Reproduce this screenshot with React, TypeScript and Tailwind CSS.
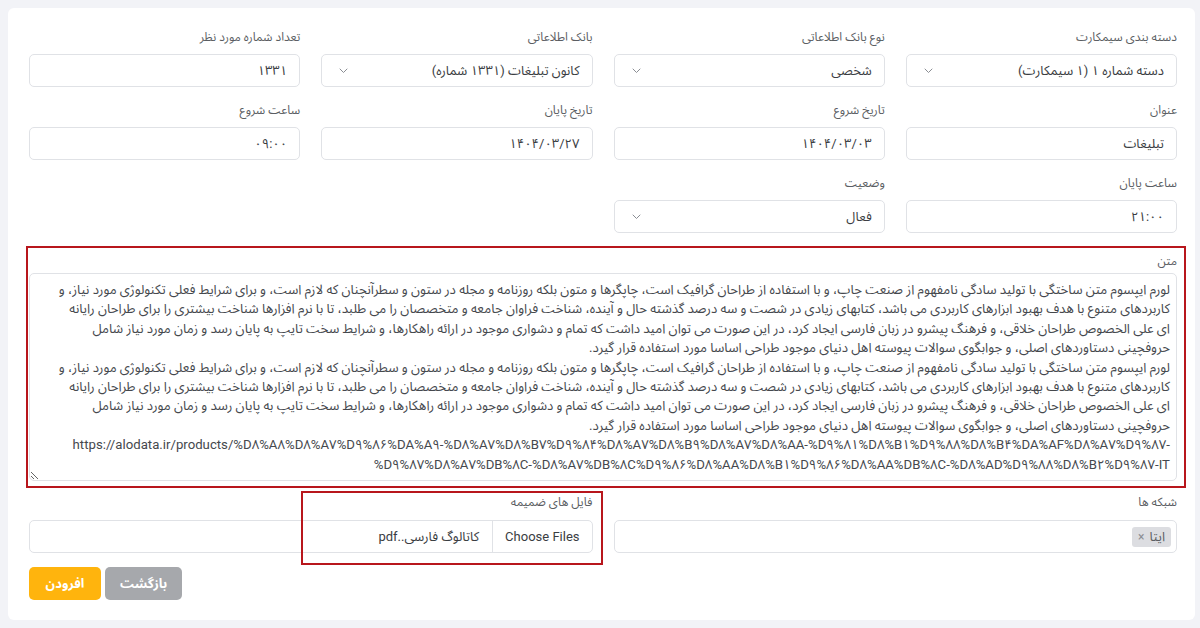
import React from "react";

const FONT = { fontFamily: 'Roboto, "Noto Sans Arabic", "DejaVu Sans", sans-serif' };

const LINES = [
    "لورم ایپسوم متن ساختگی با تولید سادگی نامفهوم از صنعت چاپ، و با استفاده از طراحان گرافیک است، چاپگرها و متون بلکه روزنامه و مجله در ستون و سطرآنچنان که لازم است، و برای شرایط فعلی تکنولوژی مورد نیاز، و",
    "کاربردهای متنوع با هدف بهبود ابزارهای کاربردی می باشد، کتابهای زیادی در شصت و سه درصد گذشته حال و آینده، شناخت فراوان جامعه و متخصصان را می طلبد، تا با نرم افزارها شناخت بیشتری را برای طراحان رایانه",
    "ای علی الخصوص طراحان خلاقی، و فرهنگ پیشرو در زبان فارسی ایجاد کرد، در این صورت می توان امید داشت که تمام و دشواری موجود در ارائه راهکارها، و شرایط سخت تایپ به پایان رسد و زمان مورد نیاز شامل",
    "حروفچینی دستاوردهای اصلی، و جوابگوی سوالات پیوسته اهل دنیای موجود طراحی اساسا مورد استفاده قرار گیرد.",
];

// LRM marks keep the leading/trailing separators inside the URL's LTR run
const URL_1 =
    "https://alodata.ir/products/%D۸%A۸%D۸%A۷%D۹%۸۶%DA%A۹-%D۸%A۷%D۸%B۷%D۹%۸۴%D۸%A۷%D۸%B۹%D۸%A۷%D۸%AA-%D۹%۸۱%D۸%B۱%D۹%۸۸%D۸%B۴%DA%AF%D۸%A۷%D۹%۸۷-\u200E";
const URL_2 =
    "\u200E%D۹%۸۷%D۸%A۷%DB%۸C-%D۸%A۷%DB%۸C%D۹%۸۶%D۸%AA%D۸%B۱%D۹%۸۶%D۸%AA%DB%۸C-%D۸%AD%D۹%۸۸%D۸%B۲%D۹%۸۷-IT";

const BODY = [...LINES, ...LINES, URL_1, URL_2].join("\n");

function Chevron() {
    return (
        <svg width="9" height="6" viewBox="0 0 9 6" fill="none" className="shrink-0">
            <path d="M1 1l3.5 3.5L8 1" stroke="#8a8d93" strokeWidth="1" strokeLinecap="round" />
        </svg>
    );
}

function Field({ label, value, select }: { label: string; value: string; select?: boolean }) {
    return (
        <div>
            <label className="block text-[12px] leading-4 text-[#5b5e63] mb-[9px]">{label}</label>
            <div className="h-[33px] w-full rounded-[5px] border border-[#e0e2e6] bg-white pr-[12px] pl-[17px] flex items-center justify-between text-[13px] text-[#3a3d42]">
                <span>{value}</span>
                {select && <Chevron />}
            </div>
        </div>
    );
}

export default function App() {
    return (
        <div dir="rtl" style={FONT} className="min-h-screen bg-[#f2f3f7] pt-2 pb-2">
            <div className="ml-2 mr-[5px] rounded-md bg-white pt-[21px] pb-[20px] pr-[18px] pl-[21px]">
                <div className="grid grid-cols-4 gap-x-[21px] gap-y-[15px]">
                    <Field label="دسته بندی سیمکارت" value="دسته شماره ۱ (۱ سیمکارت)" select />
                    <Field label="نوع بانک اطلاعاتی" value="شخصی" select />
                    <Field label="بانک اطلاعاتی" value="کانون تبلیغات (۱۳۳۱ شماره)" select />
                    <Field label="تعداد شماره مورد نظر" value="۱۳۳۱" />
                    <Field label="عنوان" value="تبلیغات" />
                    <Field label="تاریخ شروع" value="۱۴۰۴/۰۳/۰۳" />
                    <Field label="تاریخ پایان" value="۱۴۰۴/۰۳/۲۷" />
                    <Field label="ساعت شروع" value="۰۹:۰۰" />
                    <Field label="ساعت پایان" value="۲۱:۰۰" />
                    <Field label="وضعیت" value="فعال" select />
                </div>

                <div className="mt-[13px] -mr-[9px] -ml-[3px] border-2 border-[#b8161c] pt-[5px] pb-[5px] pr-[7px] pl-[1px]">
                    <label className="block text-[12px] leading-4 text-[#5b5e63] mb-[4px]">متن</label>
                    <textarea
                        readOnly
                        wrap="off"
                        value={BODY}
                        style={FONT}
                        className="block w-full h-[208px] resize-y overflow-hidden whitespace-pre rounded-[5px] border border-[#e0e2e6] bg-white px-[6px] pt-[6px] text-[13.2px] leading-[19.4px] text-[#45484d] outline-none"
                    />
                </div>

                <div className="mt-[6px] grid grid-cols-2 gap-x-[21px]">
                    <div>
                        <label className="block text-[12px] leading-4 text-[#5b5e63] mb-[10px]">شبکه ها</label>
                        <div className="h-[33px] rounded-[5px] border border-[#e0e2e6] bg-white flex items-center pr-[5px]">
                            <span className="flex items-center gap-[5px] rounded-[3px] bg-[#dcdde1] px-[6px] h-[20px] text-[13px] text-[#5b5e63]">
                                ایتا
                                <span className="text-[12px] text-[#8a8d93]">×</span>
                            </span>
                        </div>
                    </div>
                    <div className="relative">
                        <label className="block text-[12px] leading-4 text-[#5b5e63] mb-[10px]">فایل های ضمیمه</label>
                        <div className="h-[33px] rounded-[5px] border border-[#e0e2e6] bg-white flex items-center text-[13px] text-[#3a3d42]">
                            <span className="h-full flex items-center px-[12px] border-l border-[#e0e2e6]">Choose Files</span>
                            <span className="pr-[13px]">کاتالوگ فارسی..pdf</span>
                        </div>
                        <div className="absolute -top-[3px] -right-[10px] w-[302px] h-[74px] border-2 border-[#b8161c] pointer-events-none" />
                    </div>
                </div>

                <div className="mt-[14px] flex justify-end gap-1">
                    <button className="h-[33px] w-[77px] rounded-[5px] bg-[#a6a8ac] text-[13px] font-bold text-white">بازگشت</button>
                    <button className="h-[33px] w-[72px] rounded-[5px] bg-[#ffb40d] text-[13px] font-bold text-white">افرودن</button>
                </div>
            </div>
        </div>
    );
}
